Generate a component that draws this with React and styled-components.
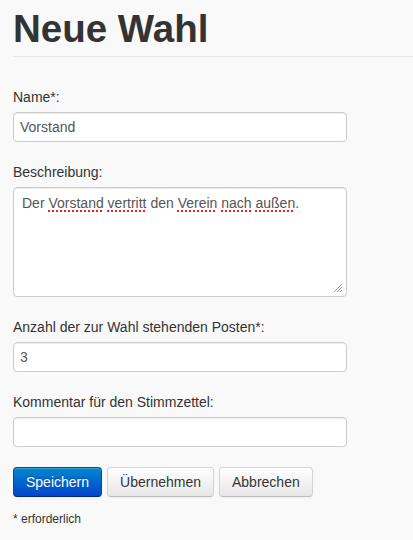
import React from "react";
import styled, { createGlobalStyle } from "styled-components";

const GlobalStyle = createGlobalStyle`
  html, body {
    margin: 0;
    padding: 0;
    background: #f9f9f9;
  }
  body {
    font-family: "Liberation Sans", Arial, Helvetica, sans-serif;
    font-size: 14px;
    line-height: 20px;
    color: #333;
  }
`;

const Page = styled.div`
  padding: 0 0 0 13px;
  min-height: 540px;
  box-sizing: border-box;
`;

const PageHeader = styled.div`
  padding: 9px 0 7px;
  border-bottom: 1px solid #e8e8e8;
`;

const Title = styled.h1`
  margin: 0;
  font-size: 38.5px;
  line-height: 40px;
  font-weight: bold;
  color: #333;
`;

const Form = styled.form`
  margin: 30px 0 0;
  width: 334px;
`;

const Field = styled.div`
  margin-bottom: 20px;
`;

const Label = styled.label`
  display: block;
  margin-bottom: 5px;
  color: #333;
`;

const Input = styled.input`
  display: block;
  box-sizing: border-box;
  width: 100%;
  height: 30px;
  margin: 0;
  padding: 4px 6px;
  font: inherit;
  color: #555;
  background: #fff;
  border: 1px solid #ccc;
  border-radius: 4px;
  box-shadow: inset 0 1px 1px rgba(0, 0, 0, 0.075);
  outline: none;
`;

const TextBox = styled.div`
  position: relative;
  box-sizing: border-box;
  height: 110px;
  padding: 5px 8px;
  color: #555;
  background: #fff;
  border: 1px solid #ccc;
  border-radius: 4px;
  box-shadow: inset 0 1px 1px rgba(0, 0, 0, 0.075);
`;

const Misspelled = styled.span`
  text-decoration: underline dotted #ff1a1a;
  text-decoration-thickness: 2px;
  text-underline-offset: 2px;
`;

const Grip = styled.svg`
  position: absolute;
  right: 3px;
  bottom: 3px;
`;

const Actions = styled.div`
  display: flex;
  gap: 5px;
`;

const Button = styled.button`
  box-sizing: border-box;
  height: 30px;
  margin: 0;
  padding: 4px 12px;
  font: inherit;
  line-height: 20px;
  border-radius: 4px;
  cursor: pointer;
  color: ${(p) => (p.$primary ? "#fff" : "#333")};
  text-shadow: ${(p) =>
    p.$primary ? "0 -1px 0 rgba(0,0,0,0.25)" : "0 1px 1px rgba(255,255,255,0.75)"};
  background: ${(p) =>
    p.$primary
      ? "linear-gradient(to bottom, #0088cc, #0044cc)"
      : "linear-gradient(to bottom, #ffffff, #e6e6e6)"};
  border-width: 1px;
  border-style: solid;
  border-color: ${(p) =>
    p.$primary
      ? "#0044cc #0044cc #002a80"
      : "#d4d4d4 #d4d4d4 #bdbdbd"};
  box-shadow: inset 0 1px 0 rgba(255, 255, 255, 0.2),
    0 1px 2px rgba(0, 0, 0, 0.05);
`;

const Hint = styled.p`
  margin: 14px 0 0;
  font-size: 12px;
  line-height: 17px;
  color: #333;
`;

export default function App() {
  return (
    <>
      <GlobalStyle />
      <Page>
        <PageHeader>
          <Title>Neue Wahl</Title>
        </PageHeader>
        <Form onSubmit={(e) => e.preventDefault()}>
          <Field>
            <Label htmlFor="name">Name*:</Label>
            <Input id="name" defaultValue="Vorstand" />
          </Field>
          <Field>
            <Label>Beschreibung:</Label>
            <TextBox role="textbox">
              Der <Misspelled>Vorstand</Misspelled>{" "}
              <Misspelled>vertritt</Misspelled> den{" "}
              <Misspelled>Verein</Misspelled> <Misspelled>nach</Misspelled>{" "}
              <Misspelled>außen</Misspelled>.
              <Grip width="10" height="10" viewBox="0 0 10 10">
                <path
                  d="M9 1 L1 9 M9 4 L4 9 M9 7 L7 9"
                  stroke="#999"
                  strokeWidth="1"
                  fill="none"
                />
              </Grip>
            </TextBox>
          </Field>
          <Field>
            <Label htmlFor="posten">Anzahl der zur Wahl stehenden Posten*:</Label>
            <Input id="posten" defaultValue="3" />
          </Field>
          <Field>
            <Label htmlFor="kommentar">Kommentar für den Stimmzettel:</Label>
            <Input id="kommentar" defaultValue="" />
          </Field>
          <Actions>
            <Button type="submit" $primary>
              Speichern
            </Button>
            <Button type="button">Übernehmen</Button>
            <Button type="button">Abbrechen</Button>
          </Actions>
          <Hint>* erforderlich</Hint>
        </Form>
      </Page>
    </>
  );
}
